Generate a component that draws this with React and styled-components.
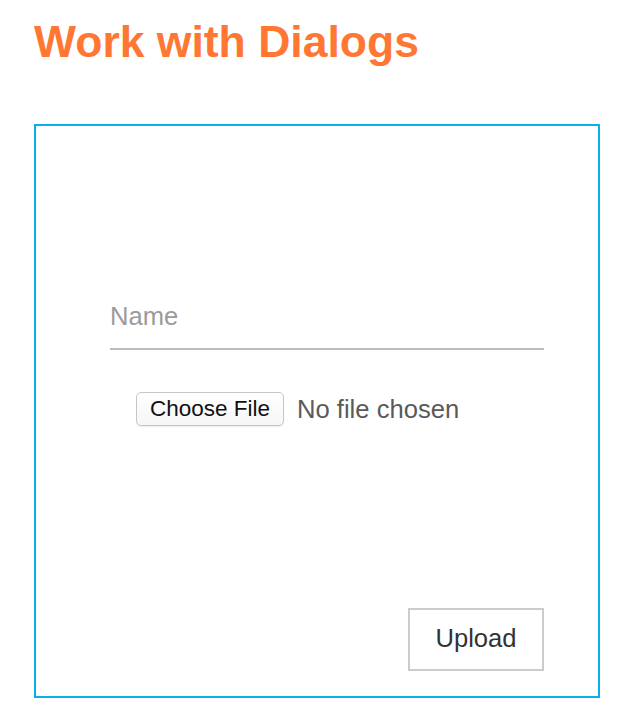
import React from "react";
import styled, { createGlobalStyle } from "styled-components";

const GlobalStyle = createGlobalStyle`
  html, body {
    margin: 0;
    padding: 0;
    background: #ffffff;
    font-family: "Liberation Sans", Arial, Helvetica, sans-serif;
  }
  * { box-sizing: border-box; }
`;

const Page = styled.div`
  padding: 17px 34px 20px;
  width: 636px;
`;

const Title = styled.h1`
  margin: 0;
  font-size: 44.5px;
  line-height: 50px;
  font-weight: 700;
  color: #ff7733;
  letter-spacing: 0;
`;

const Dialog = styled.form`
  margin-top: 57px;
  width: 566px;
  height: 574px;
  border: 2px solid #0aaeea;
  padding: 175px 54px 25px 74px;
  display: flex;
  flex-direction: column;
`;

const NameInput = styled.input`
  display: block;
  width: 100%;
  height: 49px;
  border: none;
  border-bottom: 2px solid #bcbcbc;
  padding: 0 0 17px;
  margin: 0;
  font-family: inherit;
  font-size: 25.6px;
  color: #333;
  outline: none;
  background: transparent;
  &::placeholder {
    color: #9b9b9b;
  }
`;

const FileRow = styled.label`
  display: flex;
  align-items: center;
  gap: 13px;
  margin: 42px 0 0 26px;
  cursor: pointer;
`;

const HiddenFile = styled.input`
  position: absolute;
  width: 1px;
  height: 1px;
  opacity: 0;
  overflow: hidden;
  pointer-events: none;
`;

const ChooseButton = styled.span`
  display: inline-flex;
  align-items: center;
  justify-content: center;
  width: 148px;
  height: 34px;
  border: 1px solid #c6c6c6;
  border-radius: 5px;
  background: linear-gradient(#ffffff, #f6f6f6);
  box-shadow: 0 1px 1px rgba(0, 0, 0, 0.08);
  font-size: 22.5px;
  color: #111;
  white-space: nowrap;
`;

const FileStatus = styled.span`
  font-size: 25.6px;
  color: #5a5a5a;
  white-space: nowrap;
`;

const Actions = styled.div`
  margin-top: auto;
  display: flex;
  justify-content: flex-end;
`;

const UploadButton = styled.button`
  width: 136px;
  height: 63px;
  border: 2px solid #cccccc;
  background: #ffffff;
  font-family: inherit;
  font-size: 25.6px;
  color: #333;
  padding: 0 0 2px;
  cursor: pointer;
`;

export default function App() {
  return (
    <>
      <GlobalStyle />
      <Page>
        <Title>Work with Dialogs</Title>
        <Dialog onSubmit={(e) => e.preventDefault()}>
          <NameInput type="text" placeholder="Name" />
          <FileRow>
            <HiddenFile type="file" />
            <ChooseButton>Choose File</ChooseButton>
            <FileStatus>No file chosen</FileStatus>
          </FileRow>
          <Actions>
            <UploadButton type="submit">Upload</UploadButton>
          </Actions>
        </Dialog>
      </Page>
    </>
  );
}
